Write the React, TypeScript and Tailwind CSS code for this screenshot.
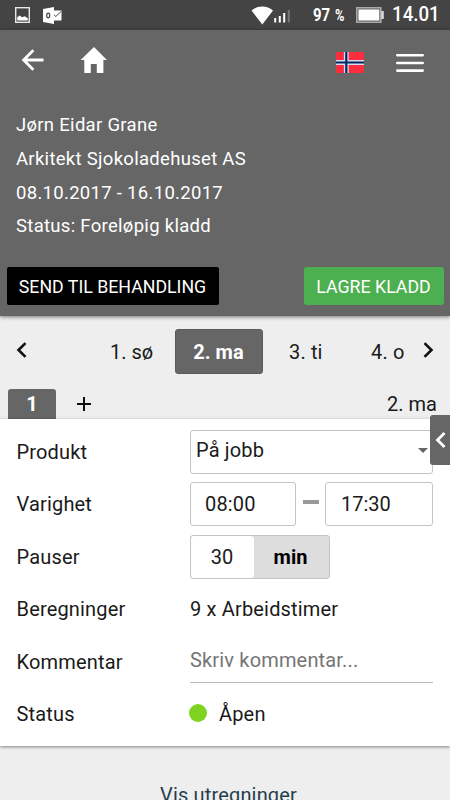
import React from 'react';

interface FieldRowProps {
  label: string;
  children: React.ReactNode;
}

const FieldRow: React.FC<FieldRowProps> = ({ label, children }) => (
  <div className="flex h-[52.5px] items-center">
    <div className="w-[173.5px] shrink-0 tracking-[0.17px]">{label}</div>
    <div className="flex w-[242.5px] items-center">{children}</div>
  </div>
);

const infoLines = [
  'Jørn Eidar Grane',
  'Arkitekt Sjokoladehuset AS',
  '08.10.2017 - 16.10.2017',
  'Status: Foreløpig kladd',
];

const StatusBar = () => (
  <div className="flex h-[30px] items-center bg-[#444] text-white">
    <svg className="ml-[15px]" width="15" height="16" viewBox="0 0 15 16">
      <rect x="0.7" y="0.7" width="13.6" height="14.6" fill="none" stroke="#e8e8e8" strokeWidth="1.4" />
      <path d="M2.2 13.5V10.2L4.8 8.6L7 10.3L9.8 9.2L12.8 11.3V13.5Z" fill="#fff" />
    </svg>
    <svg className="ml-[13px]" width="19" height="17" viewBox="0 0 19 17">
      <path d="M0 2L11 0V17L0 15Z" fill="#fff" />
      <rect x="11" y="3.5" width="7.5" height="10" fill="#fff" />
      <path d="M11 7.8L12.8 9.5L18 4.5" fill="none" stroke="#444" strokeWidth="1" />
      <ellipse cx="5.2" cy="8.5" rx="1.5" ry="2.3" fill="none" stroke="#444" strokeWidth="1.2" />
    </svg>
    <svg className="ml-[189px] shrink-0" width="39" height="19" viewBox="0 0 39 19">
      <path d="M0.5 4.5C6.5 -0.8 16 -0.8 22 4.5L11.3 18.5Z" fill="#fff" />
      <path d="M24.2 12V16.5" stroke="#fff" strokeWidth="2" />
      <path d="M28.8 10V16.5M33.2 7V16.5" stroke="#fff" strokeWidth="2" />
      <path d="M37.8 4V16.5" stroke="#777" strokeWidth="2" />
    </svg>
    <div className="ml-[23px] flex w-[43px] shrink-0 items-center text-[18px] font-bold whitespace-nowrap">
      <span className="w-[17px]"><span className="inline-block origin-left scale-x-[0.83]">97</span></span>
      <span className="ml-[5px] inline-block origin-left scale-x-[0.75] text-[17px]">%</span>
    </div>
    <svg className="shrink-0" width="28" height="16" viewBox="0 0 28 16">
      <rect x="0.8" y="0.8" width="24" height="14.4" fill="none" stroke="#aaa" strokeWidth="1.6" />
      <path d="M26.5 4V12" stroke="#ddd" strokeWidth="2.5" />
      <rect x="2.4" y="2.4" width="21" height="11.2" fill="#fff" />
    </svg>
    <div className="ml-[8px] origin-left scale-x-[0.96] text-[19.5px] font-medium">14.01</div>
  </div>
);

const Header = () => (
  <div className="relative h-[286px] bg-[#666] text-white shadow-[0_1px_4px_rgba(0,0,0,0.5)]">
    <div className="flex h-[64px] items-center">
      <svg className="mb-[4px] ml-[21px]" width="23" height="22" viewBox="0 0 23 22" fill="none" stroke="#fff" strokeWidth="2.8">
        <path d="M12.4 1.2L2.6 11L12.4 20.8M2.6 11H22.5" />
      </svg>
      <svg className="mb-[4px] ml-[36px]" width="28" height="27" viewBox="0 0 28 27" fill="#fff">
        <path d="M14 0L27 13H23.4V26H16.8V17H10.8V26H4.3V13H0.6Z" />
      </svg>
      <svg className="ml-[228px]" width="28" height="21" viewBox="0 0 28 21">
        <rect width="28" height="21" fill="#fb2d3e" />
        <path d="M10.3 0V21M0 10.5H28" stroke="#d7dbea" strokeWidth="4.8" />
        <path d="M10.3 0V21M0 10.5H28" stroke="#002868" strokeWidth="2.2" />
      </svg>
      <svg className="mt-px ml-[32px]" width="28" height="20" viewBox="0 0 28 20" stroke="#fff" strokeWidth="2.6" strokeLinecap="round">
        <path d="M1.3 2.3H26.7M1.3 10H26.7M1.3 17.6H26.7" />
      </svg>
    </div>
    <div className="ml-4 pt-[15px] text-[18.5px] leading-[33.8px] tracking-[0.3px]">
      {infoLines.map((line) => (
        <div key={line}>{line}</div>
      ))}
    </div>
    <div className="mt-[23px] flex justify-between px-[6.5px] text-[17.75px]">
      <button className="h-[38px] w-[212px] rounded-xs bg-black pt-px whitespace-nowrap">SEND TIL BEHANDLING</button>
      <button className="h-[38px] w-[140px] rounded-[3px] bg-[#4caf50] pt-px whitespace-nowrap">LAGRE KLADD</button>
    </div>
  </div>
);

const DayTabs = () => (
  <div className="flex h-[73px] items-center pb-[2px]">
    <svg className="mb-[3px] ml-[16px] shrink-0" width="11" height="16" viewBox="0 0 11 16" fill="none" stroke="#111" strokeWidth="2.6">
      <path d="M9.5 1.1L2.5 8L9.5 14.9" />
    </svg>
    <div className="ml-[83px] w-[65px] shrink-0">1. sø</div>
    <div className="flex h-[45px] w-[88px] shrink-0 items-center justify-center rounded-[3px] border border-[#5a5a5a] bg-[#666] pr-px font-bold text-white">
      2. ma
    </div>
    <div className="ml-[26px] w-[82px] shrink-0 tracking-[0.15px]">3. ti</div>
    <div className="w-[52px] shrink-0 tracking-[0.15px]">4. o</div>
    <svg className="mb-[3px] shrink-0" width="11" height="16" viewBox="0 0 11 16" fill="none" stroke="#111" strokeWidth="2.6">
      <path d="M1.5 1.1L8.5 8L1.5 14.9" />
    </svg>
  </div>
);

const App: React.FC = () => {
  return (
    <div className="relative h-[800px] w-[450px] overflow-hidden bg-[#eee] font-['Roboto',sans-serif] text-[20px] leading-6 text-[#1a1a1a]">
      <StatusBar />
      <Header />
      <DayTabs />

      {/* Entry tabs */}
      <div className="flex h-[29.5px] items-center pr-[13px] pl-[8px]">
        <div className="flex h-full w-[48px] items-center justify-center rounded-t-[3px] bg-[#666] font-bold text-white">1</div>
        <svg className="ml-[21px]" width="14" height="14" viewBox="0 0 14 14" stroke="#111" strokeWidth="2">
          <path d="M7 0V14M0 7H14" />
        </svg>
        <div className="ml-auto">2. ma</div>
      </div>

      {/* Entry form */}
      <div className="relative h-[327.5px] bg-white pt-[7px] pl-[16.5px] shadow-[0_1px_3px_rgba(0,0,0,0.45)]">
        <FieldRow label="Produkt">
          <div className="flex h-[44px] w-full items-center justify-between rounded-[3px] border border-[#c4c4c4] pr-[4px] pb-[3px] pl-[5px]">
            <span className="tracking-[0.15px]">På jobb</span>
            <svg width="10" height="5" viewBox="0 0 10 5" fill="#666">
              <path d="M0 0H10L5 5Z" />
            </svg>
          </div>
        </FieldRow>
        <FieldRow label="Varighet">
          <div className="h-[44px] w-[106px] shrink-0 rounded-[3px] border border-[#c4c4c4] pt-[9px] pl-[14px] tracking-[0.15px]">08:00</div>
          <div className="mx-[6.5px] mb-[4px] h-[4px] w-[16px] shrink-0 bg-[#999]" />
          <div className="h-[44px] w-[107.5px] shrink-0 rounded-[3px] border border-[#c4c4c4] pt-[9px] pl-[15px]">17:30</div>
        </FieldRow>
        <FieldRow label="Pauser">
          <div className="flex h-[44px] w-[140px] rounded-[3px] border border-[#c4c4c4] bg-[#ddd]">
            <div className="flex w-[63px] items-center justify-center rounded-[3px] bg-white pr-px">30</div>
            <div className="flex flex-1 items-center justify-center pr-[2px] font-bold text-black">min</div>
          </div>
        </FieldRow>
        <FieldRow label="Beregninger">
          <span className="tracking-[0.17px]">9 x Arbeidstimer</span>
        </FieldRow>
        <FieldRow label="Kommentar">
          <div className="h-[42px] w-full border-b border-[#bbb] pt-[7px] tracking-[0.17px] text-[#757575]">Skriv kommentar...</div>
        </FieldRow>
        <FieldRow label="Status">
          <span className="mb-[3px] -ml-[1px] h-[18px] w-[18px] rounded-full bg-[#7ed321]" />
          <span className="ml-[12px] tracking-[0.17px]">Åpen</span>
        </FieldRow>
      </div>

      <div className="mt-[37px] ml-[160px] tracking-[0.17px] text-[#263d4c]">Vis utregninger</div>

      {/* Side panel handle */}
      <button className="absolute top-[415px] right-0 flex h-[50px] w-[20px] items-center justify-center rounded-l-[3px] bg-[#666]">
        <svg width="11" height="16" viewBox="0 0 11 16" fill="none" stroke="#fff" strokeWidth="2.8">
          <path d="M9.5 1L2.5 8L9.5 15" />
        </svg>
      </button>
    </div>
  );
};

export default App;
